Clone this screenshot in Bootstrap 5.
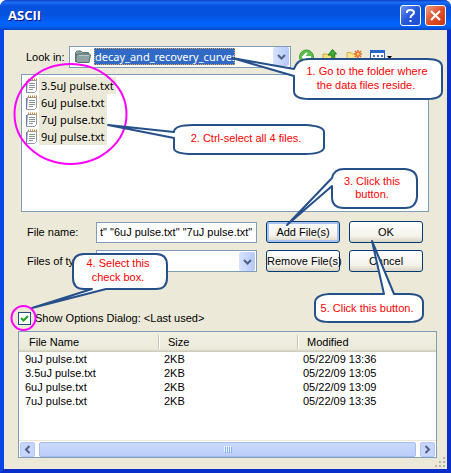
<!DOCTYPE html>
<html lang="en">
<head>
<meta charset="utf-8">
<meta name="viewport" content="width=device-width, initial-scale=1">
<title>ASCII</title>
<link href="https://cdn.jsdelivr.net/npm/bootstrap@5.3.0/dist/css/bootstrap.min.css" rel="stylesheet">
<style>
body{font:11px/16px "Liberation Sans",Arial,sans-serif;color:#000;background:#fff}
.xp-window{background:#ece9d8;border:solid #0831d9;border-width:0 4px 4px;border-color:#0a3bea #0a2fc8 #0a2fc8 #0a45e8;border-radius:7px 7px 0 0;min-height:473px}
.xp-title{height:30px;margin:0 -4px;padding:0 5px 0 8px;border-radius:7px 7px 0 0;background:linear-gradient(#0a3fc4,#1c6cf5 8%,#0551dc 20%,#0453e0 50%,#0263fb 78%,#0262f5 88%,#0246c4)}
.xp-title h1{font:bold 13px/16px "Open Sans","Liberation Sans",sans-serif;color:#fff;text-shadow:1px 1px #0f1089}
.cap-btn{width:21px;height:21px;border:1px solid #fff;border-radius:3px;padding:0;background:linear-gradient(135deg,#6b94f3,#2458d8 50%,#1c4fd0)}
.cap-close{background:linear-gradient(135deg,#ee9c80,#df4f2a 50%,#c93a15)}
.xp-body{padding:16px 10px 11px 14px}
.xp-field{background:#fff;border:1px solid #7f9db9}
.look-row{padding-left:8px;height:21px}
.look-label{width:43px}
.look-combo{width:222px;height:22px;padding:1px 1px 1px 5px}
.xp-select{appearance:none;border:0;border-radius:0;background:#fff;color:#000;padding:0;outline:0;min-width:0}
.look-combo .xp-select{background:#316ac5;color:#fff;font:11px/15px "Noto Sans","DejaVu Sans",sans-serif;height:17px;width:141px;padding:0;border:1px dotted #e5a34c;margin-left:3px}
.drop{width:16px;height:19px;background:linear-gradient(90deg,#d7e2fe,#b5c8f8);border-radius:2px}
.tool{border:0;background:none;padding:0;height:18px}
.file-list{margin:7px 8px 0 3px;height:138px;padding:2px 3px;font:11px/17px "Noto Sans","DejaVu Sans",sans-serif}
.file-list li{height:17px}
.file-list span{background:#ece9d8;padding:0 2px;height:17px}
.form-area{margin:9px 14px 0 9px;gap:7px}
.form-area label{width:69px;white-space:nowrap}
.name-box{height:21px;border-radius:0;padding:0 3px;min-width:0;outline:0}
.type-combo{height:22px;padding:1px}
.xp-btn{width:74px;height:22px;margin-left:9px;border:1px solid #003c74;border-radius:3px;padding:0;background:linear-gradient(#fff,#f4f2ea 70%,#d8d2c0);color:#000;white-space:nowrap}
.xp-btn.is-default{box-shadow:inset 0 0 0 2px #a9c2f0}
.check-row{margin-top:38px;height:16px}
.xp-check{appearance:none;width:13px;height:13px;border:1px solid #1c5180;background:#fff url("data:image/svg+xml,%3Csvg xmlns='http://www.w3.org/2000/svg' viewBox='0 0 11 11'%3E%3Cpath d='M2 5L4.5 7.5L9 3' fill='none' stroke='%2321a121' stroke-width='2'/%3E%3C/svg%3E")}
.result-box{margin-top:5px;height:127px}
.result-table{table-layout:fixed;width:100%}
.result-table th{height:20px;padding:0 0 0 10px;font-weight:400;background:linear-gradient(#f1efe2,#ebeadb 85%,#cbc7b8);position:relative}
.result-table th+th::before{content:"";position:absolute;left:0;top:3px;height:14px;border-left:1px solid #c7c5b2;border-right:1px solid #fff}
.result-table td{padding:0 0 0 6px;height:14px;line-height:14px}
.hbar{height:17px;border-top:1px solid #ece9d8;padding:1px}
.arrow{width:15px;height:15px;border:1px solid #b5c8f5;border-radius:2px;background:#c6d5fb;padding:0}
.thumb{border:1px solid #a5bdee;border-radius:2px;background:linear-gradient(#c9d8fd,#bccdfb);height:15px}
.notes{pointer-events:none}
.notes .note{fill:#fff;stroke:#26508a;stroke-width:2;stroke-linejoin:round}
.notes text{font:11px "Liberation Sans",Arial,sans-serif;fill:#f00;text-anchor:middle}
.grip{right:1px;bottom:1px}
</style>
<script src="https://cdn.jsdelivr.net/npm/bootstrap@5.3.0/dist/js/bootstrap.bundle.min.js"></script>
</head>
<body class="position-relative">
<main class="xp-window position-relative">
  <header class="xp-title d-flex align-items-center">
    <h1 class="m-0 me-auto">ASCII</h1>
    <button class="cap-btn d-flex me-1 align-items-center justify-content-center" aria-label="Help"><svg width="17" height="17" viewBox="0 0 17 17"><path d="M5 6V5Q5 3 8.500 3Q12 3 12 5.500Q12 7 10 8Q8.500 9 8.500 11M8.500 13V15" fill="none" stroke="#fff" stroke-width="2"/></svg></button>
    <button class="cap-btn cap-close d-flex align-items-center justify-content-center" aria-label="Close"><svg width="17" height="17" viewBox="0 0 17 17"><path d="M4 4L13 13M13 4L4 13" stroke="#fff" stroke-width="2.200"/></svg></button>
  </header>
  <div class="xp-body">
    <div class="look-row d-flex align-items-center">
      <label class="look-label" for="look">Look in:</label>
      <div class="xp-field look-combo d-flex align-items-center">
        <svg width="16" height="14" viewBox="0 0 16 14"><path d="M.5 12V2.500L2 1H6L7.500 2.500H13.500V5" fill="#91a5a6" stroke="#5e7577"/><path d="M3.500 12.500Q1 13 1 10V5L3 4H14.500L15.500 5L14 12.500Z" fill="#8ea3a4" stroke="#536b6d"/><path d="M4 5.500H14" stroke="#b7c8c8"/></svg>
        <select class="xp-select" id="look"><option>decay_and_recovery_curves</option></select>
        <span class="drop ms-auto d-flex align-items-center justify-content-center"><svg width="9" height="6" viewBox="0 0 9 6"><path d="M1 1L4.500 4.500L8 1" fill="none" stroke="#4d6185" stroke-width="2"/></svg></span>
      </div>
      <div class="d-flex gap-2 ms-1 ps-1">
        <button class="tool" aria-label="Back"><svg width="15" height="18" viewBox="0 0 15 18"><circle cx="7.500" cy="9" r="7" fill="#5cbf4c" stroke="#3f9a3a"/><path d="M8 5L4 9L8 13M4 9H12" fill="none" stroke="#fff" stroke-width="2"/></svg></button>
        <button class="tool" aria-label="Up one level"><svg width="16" height="18" viewBox="0 0 16 18"><path d="M1 15V6H5L6 7H13V15Z" fill="#f6df83" stroke="#d2a53a"/><path d="M8 13Q10 12 10 7H6L10.500 1.500L14.500 6H12.500Q13 12 8 13Z" fill="#3fb03a" stroke="#1f7d20"/></svg></button>
        <button class="tool" aria-label="New folder"><svg width="16" height="18" viewBox="0 0 16 18"><path d="M1 14V4.500H5L6 6H11V14Z" fill="#f9e391" stroke="#d9ad45"/><path d="M12 2V10M8 6H16M9 3L15 9M15 3L9 9" stroke="#e8642a" stroke-width="1.500"/><circle cx="12" cy="6" r="1.500" fill="#ffd84d"/></svg></button>
        <button class="tool" aria-label="Views"><svg width="23" height="18" viewBox="0 0 23 18"><path d="M.5 2.500H14.500V14.500H.5Z" fill="#fff" stroke="#2460c4"/><path d="M0 2H15V5H0Z" fill="#2766cf"/><path d="M3 7H5V9H3ZM7 7H9V9H7ZM11 7H13V9H11Z" fill="#4773b5"/><path d="M17 8H22L19.500 11Z"/></svg></button>
      </div>
    </div>
    <ul class="xp-field file-list list-unstyled mb-0">
      <li class="d-flex"><svg width="14" height="17" viewBox="0 0 14 17"><use href="#pad"/></svg><span>3.5uJ pulse.txt</span></li>
      <li class="d-flex"><svg width="14" height="17" viewBox="0 0 14 17"><use href="#pad"/></svg><span>6uJ pulse.txt</span></li>
      <li class="d-flex"><svg width="14" height="17" viewBox="0 0 14 17"><use href="#pad"/></svg><span>7uJ pulse.txt</span></li>
      <li class="d-flex"><svg width="14" height="17" viewBox="0 0 14 17"><use href="#pad"/></svg><span>9uJ pulse.txt</span></li>
    </ul>
    <form class="form-area d-flex flex-column">
      <div class="d-flex align-items-center">
        <label for="fname">File name:</label>
        <input class="xp-field name-box flex-fill" id="fname" value='t" "6uJ pulse.txt" "7uJ pulse.txt"'>
        <button type="button" class="xp-btn is-default">Add File(s)</button>
        <button type="button" class="xp-btn">OK</button>
      </div>
      <div class="d-flex align-items-center">
        <label for="ftype">Files of type:</label>
        <div class="xp-field type-combo d-flex flex-fill">
          <select class="xp-select flex-fill" id="ftype"><option></option></select>
          <span class="drop d-flex align-items-center justify-content-center"><svg width="9" height="6" viewBox="0 0 9 6"><path d="M1 1L4.500 4.500L8 1" fill="none" stroke="#4d6185" stroke-width="2"/></svg></span>
        </div>
        <button type="button" class="xp-btn">Remove File(s)</button>
        <button type="button" class="xp-btn">Cancel</button>
      </div>
    </form>
    <div class="check-row d-flex align-items-center">
      <input type="checkbox" class="xp-check me-1" id="opts" checked>
      <label for="opts">Show Options Dialog: &lt;Last used&gt;</label>
    </div>
    <div class="xp-field result-box d-flex flex-column">
      <table class="result-table">
        <thead><tr><th>File Name</th><th>Size</th><th>Modified</th></tr></thead>
        <tbody>
          <tr><td>9uJ pulse.txt</td><td>2KB</td><td>05/22/09 13:36</td></tr>
          <tr><td>3.5uJ pulse.txt</td><td>2KB</td><td>05/22/09 13:05</td></tr>
          <tr><td>6uJ pulse.txt</td><td>2KB</td><td>05/22/09 13:09</td></tr>
          <tr><td>7uJ pulse.txt</td><td>2KB</td><td>05/22/09 13:35</td></tr>
        </tbody>
      </table>
      <div class="hbar d-flex mt-auto">
        <button class="arrow d-flex align-items-center justify-content-center" aria-label="Scroll left"><svg width="7" height="9" viewBox="0 0 7 9"><path d="M5.500 1L2 4.500L5.500 8" fill="none" stroke="#4d6185" stroke-width="2"/></svg></button>
        <div class="thumb flex-fill mx-1 d-flex align-items-center justify-content-center"><svg width="8" height="7" viewBox="0 0 8 7"><path d="M.5 0V6M2.500 0V6M4.500 0V6M6.500 0V6" stroke="#eef4fe"/><path d="M1.500 1V7M3.500 1V7M5.500 1V7M7.500 1V7" stroke="#8cb0f8"/></svg></div>
        <button class="arrow d-flex align-items-center justify-content-center" aria-label="Scroll right"><svg width="7" height="9" viewBox="0 0 7 9"><path d="M1.500 1L5 4.500L1.500 8" fill="none" stroke="#4d6185" stroke-width="2"/></svg></button>
      </div>
    </div>
  </div>
  <svg class="grip position-absolute" width="12" height="12" viewBox="0 0 12 12"><path d="M9 1H11V3H9ZM5 5H7V7H5ZM9 5H11V7H9ZM1 9H3V11H1ZM5 9H7V11H5ZM9 9H11V11H9Z" fill="#b8b4a3"/></svg>
</main>
<svg class="notes position-absolute top-0 start-0" width="451" height="473" viewBox="0 0 451 473">
  <defs><g id="pad"><path d="M2.500 3.500H11.500V13.500L9.500 15.500H1.500Z" fill="#fff" stroke="#9196ac"/><path d="M4 6.500H10M4 8.500H10M4 10.500H10M4 12.500H8" stroke="#8d9498"/><path d="M3 2.500H12" stroke="#c98a2c" stroke-width="2" stroke-dasharray="1 1"/><path d="M1.500 4V15" stroke="#6d78b4"/></g></defs>
  <ellipse cx="70.500" cy="114" rx="56" ry="50" fill="none" stroke="#f0f" stroke-width="2"/>
  <path class="note" d="M232 58L294 69Q297 59 309 59H427Q442 59 442 67V91Q442 99 427 99H309Q294 99 294 91V76Z"/>
  <path class="note" d="M108 125L174 132Q174 125 193 125H305Q324 126 324 132V148Q322 154 305 154H193Q174 154 174 148V138Z"/>
  <path class="note" d="M287 225L332 178Q334 169 344 169H405Q417 170 417 180V197Q416 208 405 208H344Q332 208 332 197V186Z"/>
  <path class="note" d="M32 308L92 289H84Q73 289 73 278V265Q73 254 84 254H156Q167 254 167 265V278Q167 289 156 289H106Z"/>
  <path class="note" d="M372 241L384 294H329Q315 295 315 303V314Q315 322 329 322H409Q423 322 423 314V303Q423 294 409 294H394Z"/>
  <circle cx="23.500" cy="318" r="12" fill="none" stroke="#f0f" stroke-width="2"/>
  <text x="367" y="75">1. Go to the folder where</text><text x="366" y="89">the data files reside.</text>
  <text x="246" y="142">2. Ctrl-select all 4 files.</text>
  <text x="372" y="185">3. Click this</text><text x="372" y="198">button.</text>
  <text x="118" y="267">4. Select this</text><text x="118" y="281">check box.</text>
  <text x="367" y="312">5. Click this button.</text>
</svg>
</body>
</html>
